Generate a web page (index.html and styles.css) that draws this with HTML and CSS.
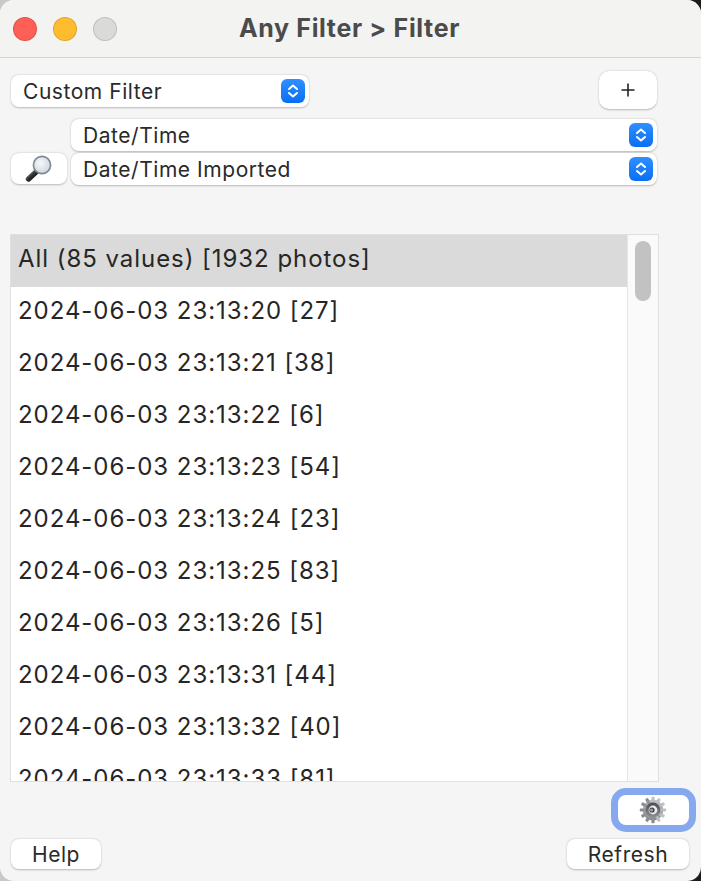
FILE: index.html
```html
<!DOCTYPE html>
<html lang="en">
<head>
  <meta charset="UTF-8">
  <meta name="viewport" content="width=device-width, initial-scale=1.0">
  <title>Any Filter &gt; Filter</title>
  <link rel="stylesheet" href="styles.css">
</head>
<body>
  <div class="window">
    <header class="titlebar">
      <div class="lights">
        <span class="light light-close"></span>
        <span class="light light-min"></span>
        <span class="light light-zoom"></span>
      </div>
      <h1 class="title">Any Filter &gt; Filter</h1>
    </header>

    <main class="content">
      <div class="preset-row">
        <div class="popup popup-preset">
          <span>Custom Filter</span>
          <svg class="stepper" viewBox="0 0 24 24"><rect width="24" height="24" rx="6" fill="url(#blue1)"/><path d="M8 10 L12 6.5 L16 10 M8 14 L12 17.5 L16 14" fill="none" stroke="#fff" stroke-width="2" stroke-linecap="round" stroke-linejoin="round"/><defs><linearGradient id="blue1" x1="0" y1="0" x2="0" y2="1"><stop offset="0" stop-color="#2f90ff"/><stop offset="1" stop-color="#0a6ef2"/></linearGradient></defs></svg>
        </div>
        <button class="btn btn-add">
          <svg viewBox="0 0 14 14" width="14" height="14"><path d="M7 0.5 V13.5 M0.5 7 H13.5" stroke="#222" stroke-width="1.6"/></svg>
        </button>
      </div>

      <div class="field-rows">
        <div class="popup popup-field field-top">
          <span>Date/Time</span>
          <svg class="stepper" viewBox="0 0 24 24"><rect width="24" height="24" rx="6" fill="url(#blue1)"/><path d="M8 10 L12 6.5 L16 10 M8 14 L12 17.5 L16 14" fill="none" stroke="#fff" stroke-width="2" stroke-linecap="round" stroke-linejoin="round"/></svg>
        </div>
        <button class="btn btn-search">
          <svg viewBox="0 0 32 30" width="32" height="30">
            <defs>
              <radialGradient id="lens" cx="0.4" cy="0.4" r="0.7"><stop offset="0" stop-color="#f6f8fb"/><stop offset="1" stop-color="#c9d2dc"/></radialGradient>
              <linearGradient id="grip" x1="0" y1="0" x2="1" y2="1"><stop offset="0" stop-color="#8a8a8a"/><stop offset="0.5" stop-color="#2c2c2c"/><stop offset="1" stop-color="#111"/></linearGradient>
            </defs>
            <path d="M13 18 L5.5 25" stroke="url(#grip)" stroke-width="5.4" stroke-linecap="round"/>
            <circle cx="19" cy="11" r="8.6" fill="url(#lens)" stroke="#7d8892" stroke-width="1.6"/>
          </svg>
        </button>
        <div class="popup popup-field field-bottom">
          <span>Date/Time Imported</span>
          <svg class="stepper" viewBox="0 0 24 24"><rect width="24" height="24" rx="6" fill="url(#blue1)"/><path d="M8 10 L12 6.5 L16 10 M8 14 L12 17.5 L16 14" fill="none" stroke="#fff" stroke-width="2" stroke-linecap="round" stroke-linejoin="round"/></svg>
        </div>
      </div>

      <div class="list-box">
        <ul class="list">
          <li class="selected">All (85 values) [1932 photos]</li>
          <li>2024-06-03 23:13:20 [27]</li>
          <li>2024-06-03 23:13:21 [38]</li>
          <li>2024-06-03 23:13:22 [6]</li>
          <li>2024-06-03 23:13:23 [54]</li>
          <li>2024-06-03 23:13:24 [23]</li>
          <li>2024-06-03 23:13:25 [83]</li>
          <li>2024-06-03 23:13:26 [5]</li>
          <li>2024-06-03 23:13:31 [44]</li>
          <li>2024-06-03 23:13:32 [40]</li>
          <li>2024-06-03 23:13:33 [81]</li>
        </ul>
        <div class="scroll-track"><div class="scroll-thumb"></div></div>
      </div>

      <div class="gear-row">
        <button class="btn btn-gear">
          <svg class="gear-icon" viewBox="0 0 28 28" width="28" height="28">
            <defs>
              <linearGradient id="metal" x1="0" y1="0" x2="0" y2="1"><stop offset="0" stop-color="#c4c6c9"/><stop offset="1" stop-color="#85888c"/></linearGradient>
              <linearGradient id="hub" x1="0" y1="0" x2="0" y2="1"><stop offset="0" stop-color="#4a4c50"/><stop offset="1" stop-color="#8d9094"/></linearGradient>
            </defs>
            <g fill="url(#metal)">
              <circle cx="14" cy="14" r="10.4"/>
              <rect x="12.4" y="0.8" width="3.2" height="26.4" rx="1"/>
              <rect x="12.4" y="0.8" width="3.2" height="26.4" rx="1" transform="rotate(30 14 14)"/>
              <rect x="12.4" y="0.8" width="3.2" height="26.4" rx="1" transform="rotate(60 14 14)"/>
              <rect x="12.4" y="0.8" width="3.2" height="26.4" rx="1" transform="rotate(90 14 14)"/>
              <rect x="12.4" y="0.8" width="3.2" height="26.4" rx="1" transform="rotate(120 14 14)"/>
              <rect x="12.4" y="0.8" width="3.2" height="26.4" rx="1" transform="rotate(150 14 14)"/>
            </g>
            <circle cx="14" cy="14" r="7.4" fill="url(#hub)"/>
            <circle cx="14" cy="14" r="4.4" fill="#e8e9ea"/>
            <circle cx="13" cy="14" r="2.6" fill="#3d3f43"/>
            <circle cx="12.6" cy="14" r="1.6" fill="#9a9da1"/>
          </svg>
        </button>
      </div>

      <footer class="footer">
        <button class="btn btn-help">Help</button>
        <button class="btn btn-refresh">Refresh</button>
      </footer>
    </main>
  </div>
</body>
</html>
```

FILE: styles.css
```css
* {
  box-sizing: border-box;
}

html,
body {
  height: 100%;
}

body {
  margin: 0;
  overflow: hidden;
  background: linear-gradient(90deg, #c9c9c9 0%, #3a3a3a 60%, #1c1c1c 100%);
  font-family: Inter, "Liberation Sans", sans-serif;
  color: #2a2a2a;
}

.window {
  display: flex;
  flex-direction: column;
  height: 881px;
  background-color: #f5f5f5;
  border-radius: 14px;
  overflow: hidden;
}

/* title bar */
.titlebar {
  display: flex;
  align-items: center;
  justify-content: center;
  position: relative;
  flex: none;
  height: 58px;
  background-color: #f3f3f2;
  border-bottom: 1px solid #d4d4d4;
}

.lights {
  position: absolute;
  left: 13px;
  top: 17px;
  display: flex;
  gap: 16px;
}

.light {
  width: 24px;
  height: 24px;
  border-radius: 50%;
  border: 1px solid rgba(0, 0, 0, 0.12);
}

.light-close { background-color: #fe5f57; }
.light-min { background-color: #febc2e; }
.light-zoom { background-color: #dadad9; }

.title {
  margin: 0 2px 1px 0;
  font-size: 25px;
  font-weight: 700;
  letter-spacing: 0.65px;
  color: #4b4b4b;
}

.content {
  flex: 1;
  display: flex;
  flex-direction: column;
  padding: 13px 12px 11px 10px;
}

/* popups and buttons */
.popup,
.btn {
  background-color: #fff;
  border: none;
  border-radius: 8px;
  box-shadow: 0 0.5px 2px rgba(0, 0, 0, 0.25);
  font-family: inherit;
  font-size: 21px;
  letter-spacing: 0.55px;
  color: #2a2a2a;
}

.popup {
  display: flex;
  align-items: center;
  justify-content: space-between;
  height: 32px;
  padding: 0 4px 0 12px;
}

.stepper {
  width: 24px;
  height: 24px;
  flex: none;
}

.btn {
  display: flex;
  align-items: center;
  justify-content: center;
  padding: 0;
}

.preset-row {
  display: flex;
  align-items: center;
  justify-content: space-between;
  padding-left: 1px;
  padding-right: 32px;
}

.popup-preset {
  width: 298px;
  margin-top: 2px;
}

.btn-add {
  width: 58px;
  height: 38px;
  border-radius: 10px;
}

.field-rows {
  display: grid;
  grid-template-columns: 56px 586px;
  grid-template-rows: 32px 32px;
  column-gap: 4px;
  row-gap: 2px;
  margin-top: 10px;
  padding-left: 1px;
}

.field-top {
  grid-column: 2;
  grid-row: 1;
}

.field-bottom {
  grid-column: 2;
  grid-row: 2;
}

.btn-search {
  grid-column: 1;
  grid-row: 2;
  height: 31px;
}

/* list */
.list-box {
  display: flex;
  flex: none;
  width: 649px;
  height: 548px;
  margin-top: 49px;
  border: 1px solid #e0e0e0;
  background-color: #fff;
  overflow: hidden;
}

.list {
  flex: 1;
  margin: 0;
  padding: 0;
  list-style: none;
  font-size: 24px;
  letter-spacing: 0.95px;
  color: #262626;
  overflow: hidden;
}

.list li {
  height: 52px;
  line-height: 47px;
  padding-left: 7px;
  white-space: nowrap;
}

.list li.selected {
  background-color: #dadada;
}

.scroll-track {
  flex: none;
  width: 31px;
  padding: 6px 0 0 7px;
  background-color: #fafafa;
  border-left: 1px solid #e6e6e6;
}

.scroll-thumb {
  width: 16px;
  height: 60px;
  border-radius: 8px;
  background-color: #c2c2c2;
}

/* bottom controls */
.gear-row {
  display: flex;
  justify-content: flex-end;
  margin-top: 13px;
}

.btn-gear {
  width: 71px;
  height: 30px;
  border-radius: 8px;
  box-shadow: 0 0 0 7px #85a8ef;
}

.gear-icon {
  margin-right: 2px;
}

.footer {
  display: flex;
  justify-content: space-between;
  margin-top: 14px;
  padding-left: 1px;
}

.btn-help {
  width: 90px;
  height: 30px;
}

.btn-refresh {
  width: 122px;
  height: 30px;
}
```
